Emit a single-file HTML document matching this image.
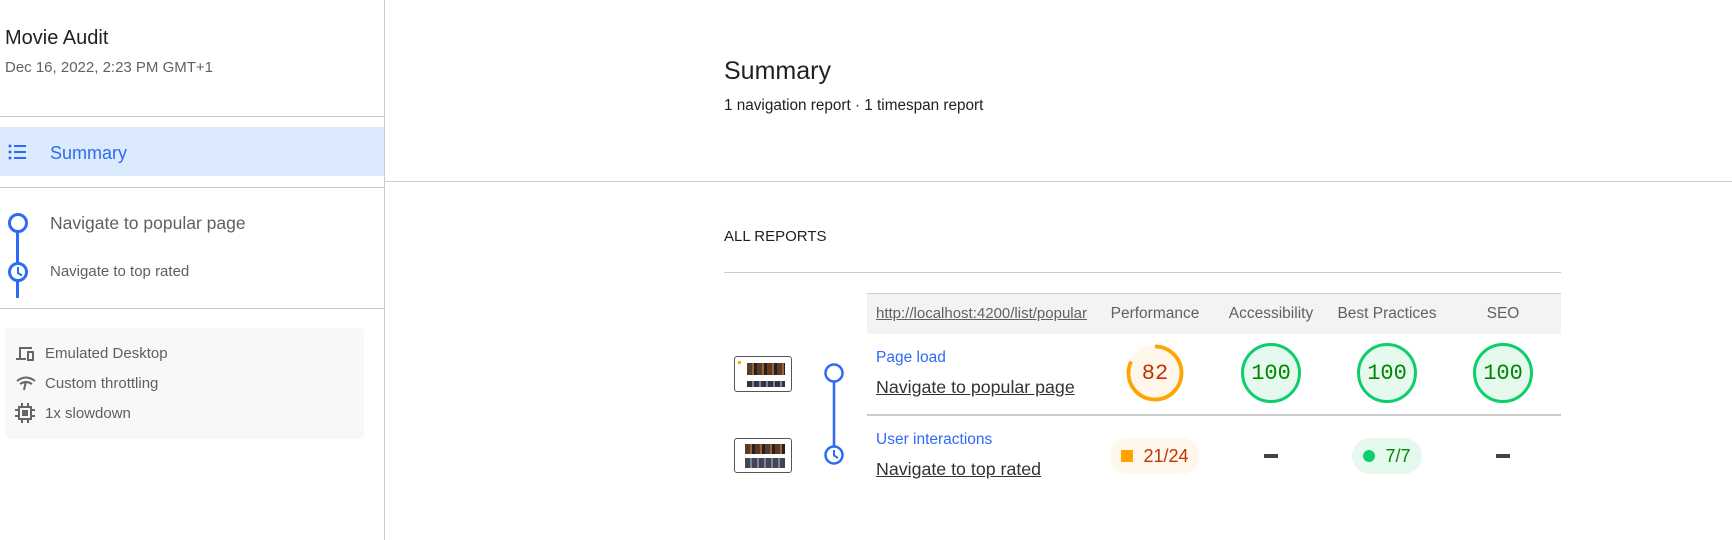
<!DOCTYPE html><html><head><style>
*{margin:0;padding:0;box-sizing:border-box}
body{width:1732px;height:540px;position:relative;background:#fff;font-family:"Liberation Sans",sans-serif;overflow:hidden;color:#212121}
.a{position:absolute;white-space:nowrap}
.hl{position:absolute;height:1px;background:#ccc}
.g{position:absolute;width:60px;height:60px;border-radius:50%;font-family:"Liberation Mono",monospace;font-size:22px;display:flex;align-items:center;justify-content:center}
.col{position:absolute;top:305px;width:140px;text-align:center;font-size:15.5px;color:#616161}
</style></head><body>
<div class="a" style="left:384px;top:0;width:1px;height:540px;background:#ccc"></div>
<div class="a" style="left:5px;top:27px;font-size:20px;color:#212121">Movie Audit</div>
<div class="a" style="left:5px;top:59px;font-size:15px;color:#616161">Dec 16, 2022, 2:23 PM GMT+1</div>
<div class="hl" style="left:0;top:116px;width:384px"></div>
<div class="a" style="left:0;top:127px;width:384px;height:49px;background:#dbeafd"></div>
<svg class="a" style="left:8px;top:143px" width="20" height="18"><g fill="#2e6af6"><circle cx="2" cy="3" r="1.5"/><circle cx="2" cy="9" r="1.5"/><circle cx="2" cy="15" r="1.5"/><rect x="6" y="2" width="12" height="2"/><rect x="6" y="8" width="12" height="2"/><rect x="6" y="14" width="12" height="2"/></g></svg>
<div class="a" style="left:50px;top:143px;font-size:18px;color:#2e6af6">Summary</div>
<div class="hl" style="left:0;top:187px;width:384px"></div>
<svg class="a" style="left:0;top:200px" width="40" height="100"><g stroke="#2e6af6" stroke-width="3" fill="none"><circle cx="18" cy="23" r="8.5"/><line x1="17.5" y1="31" x2="17.5" y2="64"/><circle cx="18" cy="72" r="8.5"/><line x1="17.5" y1="80" x2="17.5" y2="98"/><path d="M18 67v6l4 2.5" stroke-width="2"/></g></svg>
<div class="a" style="left:50px;top:213px;font-size:17.5px;color:#5f5f5f">Navigate to popular page</div>
<div class="a" style="left:50px;top:263px;font-size:15px;color:#5f5f5f">Navigate to top rated</div>
<div class="hl" style="left:0;top:308px;width:384px"></div>
<div class="a" style="left:5px;top:328px;width:359px;height:111px;background:#f8f8f8;border-radius:5px"></div>
<svg class="a" style="left:16px;top:345px" width="20" height="18"><g fill="#666"><path d="M3 2h13v2H5v9H3z"/><rect x="0" y="13" width="10" height="2"/><path d="M11 6h7v10h-7zM13 8v6h3V8z"/></g></svg>
<div class="a" style="left:45px;top:345px;font-size:15px;color:#5f5f5f">Emulated Desktop</div>
<svg class="a" style="left:16px;top:375px" width="20" height="16"><g fill="none" stroke="#666" stroke-width="2"><path d="M1 6q9-7 18 0"/><path d="M4 9q6-4 12 0"/><path d="M10 6l-2 9"/></g></svg>
<div class="a" style="left:45px;top:375px;font-size:15px;color:#5f5f5f">Custom throttling</div>
<svg class="a" style="left:15px;top:403px" width="20" height="20"><g fill="#666"><rect x="3" y="3" width="14" height="14"/><rect x="5" y="5" width="10" height="10" fill="#f8f8f8"/><rect x="7" y="7" width="6" height="6"/><rect x="6" y="0" width="2" height="3"/><rect x="12" y="0" width="2" height="3"/><rect x="6" y="17" width="2" height="3"/><rect x="12" y="17" width="2" height="3"/><rect x="0" y="6" width="3" height="2"/><rect x="0" y="12" width="3" height="2"/><rect x="17" y="6" width="3" height="2"/><rect x="17" y="12" width="3" height="2"/></g></svg>
<div class="a" style="left:45px;top:405px;font-size:15px;color:#5f5f5f">1x slowdown</div>

<div class="a" style="left:724px;top:57px;font-size:25px;color:#212121">Summary</div>
<div class="a" style="left:724px;top:97px;font-size:15.3px;color:#212121">1 navigation report · 1 timespan report</div>
<div class="hl" style="left:385px;top:181px;width:1347px"></div>
<div class="a" style="left:724px;top:228px;font-size:15px;color:#212121">ALL REPORTS</div>
<div class="hl" style="left:724px;top:272px;width:837px"></div>
<div class="a" style="left:867px;top:293px;width:694px;height:41px;background:#f3f3f3;border-top:1px solid #ccc"></div>
<div class="a" style="left:876px;top:305px;font-size:15px;color:#616161;text-decoration:underline">http://localhost:4200/list/popular</div>
<div class="col" style="left:1085px">Performance</div>
<div class="col" style="left:1201px">Accessibility</div>
<div class="col" style="left:1317px">Best Practices</div>
<div class="col" style="left:1433px">SEO</div>

<div class="a" style="left:734px;top:356px;width:58px;height:36px;border:1.5px solid #555;border-radius:3px;background:#fff"><div style="position:absolute;left:3px;top:4px;width:3px;height:3px;background:#fa0"></div><div style="position:absolute;left:12px;top:6px;width:38px;height:12px;background:repeating-linear-gradient(90deg,#5a3a2a 0 5px,#a06030 5px 7px,#222 7px 10px)"></div><div style="position:absolute;left:12px;top:24px;width:38px;height:6px;background:repeating-linear-gradient(90deg,#334 0 5px,#789 5px 7px)"></div></div>
<div class="a" style="left:734px;top:438px;width:58px;height:35px;border:1.5px solid #555;border-radius:3px;background:#fff"><div style="position:absolute;left:10px;top:5px;width:40px;height:10px;background:repeating-linear-gradient(90deg,#5a3a2a 0 5px,#a06030 5px 7px,#222 7px 10px)"></div><div style="position:absolute;left:10px;top:19px;width:40px;height:10px;background:repeating-linear-gradient(90deg,#445 0 5px,#789 5px 7px)"></div></div>
<svg class="a" style="left:822px;top:362px" width="24" height="106"><g stroke="#2e6af6" stroke-width="2.5" fill="none"><circle cx="12" cy="11" r="8.5"/><line x1="12" y1="19.5" x2="12" y2="84"/><circle cx="12" cy="93" r="8.5"/><path d="M12 88v5.5l4 2.5" stroke-width="2"/></g></svg>

<div class="a" style="left:876px;top:349px;font-size:15.5px;color:#2e6af6">Page load</div>
<div class="a" style="left:876px;top:377px;font-size:17.8px;color:#333;text-decoration:underline">Navigate to popular page</div>
<svg class="a" style="left:1125px;top:343px" width="60" height="60"><circle cx="30" cy="30" r="28" fill="#fff6ec"/><circle cx="30" cy="30" r="26.5" fill="none" stroke="#ffa400" stroke-width="3.8" stroke-dasharray="136.6 200" transform="rotate(-90 30 30)"/></svg>
<div class="g" style="left:1125px;top:343px;color:#c33300">82</div>
<div class="g" style="left:1241px;top:343px;background:#e6f9ee;color:#008800;border:3.5px solid #0cce6b">100</div>
<div class="g" style="left:1357px;top:343px;background:#e6f9ee;color:#008800;border:3.5px solid #0cce6b">100</div>
<div class="g" style="left:1473px;top:343px;background:#e6f9ee;color:#008800;border:3.5px solid #0cce6b">100</div>
<div class="a" style="left:867px;top:414px;width:694px;height:2px;background:#ccc"></div>
<div class="a" style="left:876px;top:431px;font-size:15.5px;color:#2e6af6">User interactions</div>
<div class="a" style="left:876px;top:459px;font-size:17.8px;color:#333;text-decoration:underline">Navigate to top rated</div>
<div class="a" style="left:1110px;top:438px;width:90px;height:36px;border-radius:18px;background:#fff6ec;color:#c33300;font-size:18px;display:flex;align-items:center;justify-content:center"><span style="display:inline-block;width:12px;height:12px;background:#ffa400;margin-right:10px"></span>21/24</div>
<div class="a" style="left:1264px;top:454px;width:14px;height:4px;background:#444"></div>
<div class="a" style="left:1352px;top:438px;width:70px;height:36px;border-radius:18px;background:#e6f9ee;color:#008800;font-size:18px;display:flex;align-items:center;justify-content:center"><span style="display:inline-block;width:12px;height:12px;border-radius:50%;background:#0cce6b;margin-right:10px"></span>7/7</div>
<div class="a" style="left:1496px;top:454px;width:14px;height:4px;background:#444"></div>
</body></html>
